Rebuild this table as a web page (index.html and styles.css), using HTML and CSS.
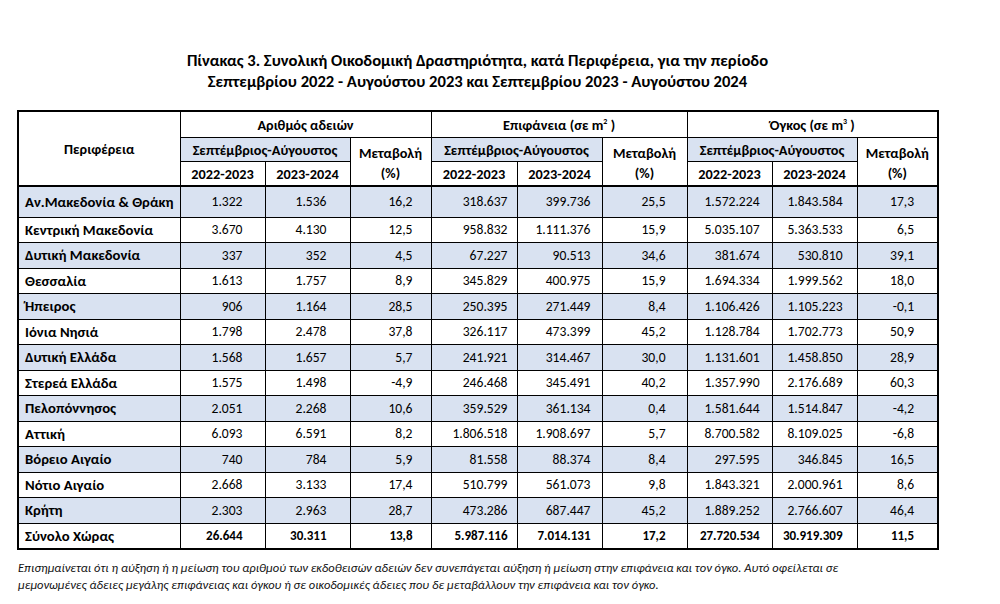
FILE: index.html
```html
<!DOCTYPE html>
<html lang="el">
<head>
<meta charset="utf-8">
<title>Πίνακας 3</title>
<link rel="stylesheet" href="styles.css">
</head>
<body>
<div class="page">
  <h1 class="title">Πίνακας 3. Συνολική Οικοδομική Δραστηριότητα, κατά Περιφέρεια, για την περίοδο<br>Σεπτεμβρίου 2022 - Αυγούστου 2023 και Σεπτεμβρίου 2023 - Αυγούστου 2024</h1>
  <table class="data">
    <colgroup>
      <col class="c-region"><col class="c-85"><col class="c-85"><col class="c-81"><col class="c-86"><col class="c-85"><col class="c-85"><col class="c-85"><col class="c-85"><col class="c-81">
    </colgroup>
    <thead>
      <tr class="h1">
        <th rowspan="3" class="region-h">Περιφέρεια</th>
        <th colspan="3">Αριθμός αδειών</th>
        <th colspan="3">Επιφάνεια (σε m<sup>2</sup> )</th>
        <th colspan="3">Όγκος (σε m<sup>3</sup> )</th>
      </tr>
      <tr class="h2">
        <th colspan="2" class="blue">Σεπτέμβριος-Αύγουστος</th>
        <th rowspan="2" class="chg">Μεταβολή<br>(%)</th>
        <th colspan="2" class="blue">Σεπτέμβριος-Αύγουστος</th>
        <th rowspan="2" class="chg">Μεταβολή<br>(%)</th>
        <th colspan="2" class="blue">Σεπτέμβριος-Αύγουστος</th>
        <th rowspan="2" class="chg">Μεταβολή<br>(%)</th>
      </tr>
      <tr class="h3">
        <th>2022-2023</th><th>2023-2024</th>
        <th>2022-2023</th><th>2023-2024</th>
        <th>2022-2023</th><th>2023-2024</th>
      </tr>
    </thead>
    <tbody>
      <tr class="blue first"><th>Αν.Μακεδονία &amp; Θράκη</th><td>1.322</td><td>1.536</td><td>16,2</td><td>318.637</td><td>399.736</td><td>25,5</td><td>1.572.224</td><td>1.843.584</td><td>17,3</td></tr>
      <tr><th>Κεντρική Μακεδονία</th><td>3.670</td><td>4.130</td><td>12,5</td><td>958.832</td><td>1.111.376</td><td>15,9</td><td>5.035.107</td><td>5.363.533</td><td>6,5</td></tr>
      <tr class="blue"><th>Δυτική Μακεδονία</th><td>337</td><td>352</td><td>4,5</td><td>67.227</td><td>90.513</td><td>34,6</td><td>381.674</td><td>530.810</td><td>39,1</td></tr>
      <tr><th>Θεσσαλία</th><td>1.613</td><td>1.757</td><td>8,9</td><td>345.829</td><td>400.975</td><td>15,9</td><td>1.694.334</td><td>1.999.562</td><td>18,0</td></tr>
      <tr class="blue"><th>Ήπειρος</th><td>906</td><td>1.164</td><td>28,5</td><td>250.395</td><td>271.449</td><td>8,4</td><td>1.106.426</td><td>1.105.223</td><td>-0,1</td></tr>
      <tr><th>Ιόνια Νησιά</th><td>1.798</td><td>2.478</td><td>37,8</td><td>326.117</td><td>473.399</td><td>45,2</td><td>1.128.784</td><td>1.702.773</td><td>50,9</td></tr>
      <tr class="blue"><th>Δυτική Ελλάδα</th><td>1.568</td><td>1.657</td><td>5,7</td><td>241.921</td><td>314.467</td><td>30,0</td><td>1.131.601</td><td>1.458.850</td><td>28,9</td></tr>
      <tr><th>Στερεά Ελλάδα</th><td>1.575</td><td>1.498</td><td>-4,9</td><td>246.468</td><td>345.491</td><td>40,2</td><td>1.357.990</td><td>2.176.689</td><td>60,3</td></tr>
      <tr class="blue"><th>Πελοπόννησος</th><td>2.051</td><td>2.268</td><td>10,6</td><td>359.529</td><td>361.134</td><td>0,4</td><td>1.581.644</td><td>1.514.847</td><td>-4,2</td></tr>
      <tr><th>Αττική</th><td>6.093</td><td>6.591</td><td>8,2</td><td>1.806.518</td><td>1.908.697</td><td>5,7</td><td>8.700.582</td><td>8.109.025</td><td>-6,8</td></tr>
      <tr class="blue"><th>Βόρειο Αιγαίο</th><td>740</td><td>784</td><td>5,9</td><td>81.558</td><td>88.374</td><td>8,4</td><td>297.595</td><td>346.845</td><td>16,5</td></tr>
      <tr><th>Νότιο Αιγαίο</th><td>2.668</td><td>3.133</td><td>17,4</td><td>510.799</td><td>561.073</td><td>9,8</td><td>1.843.321</td><td>2.000.961</td><td>8,6</td></tr>
      <tr class="blue"><th>Κρήτη</th><td>2.303</td><td>2.963</td><td>28,7</td><td>473.286</td><td>687.447</td><td>45,2</td><td>1.889.252</td><td>2.766.607</td><td>46,4</td></tr>
      <tr class="total"><th>Σύνολο Χώρας</th><td>26.644</td><td>30.311</td><td>13,8</td><td>5.987.116</td><td>7.014.131</td><td>17,2</td><td>27.720.534</td><td>30.919.309</td><td>11,5</td></tr>
    </tbody>
  </table>
  <p class="note">Επισημαίνεται ότι η αύξηση ή η μείωση του αριθμού των εκδοθεισών αδειών δεν συνεπάγεται αύξηση ή μείωση στην επιφάνεια και τον όγκο. Αυτό οφείλεται σε μεμονωμένες άδειες μεγάλης επιφάνειας και όγκου ή σε οικοδομικές άδειες που δε μεταβάλλουν την επιφάνεια και τον όγκο.</p>
</div>
</body>
</html>
```
FILE: styles.css
```css
html, body {
  margin: 0;
  padding: 0;
  background: #ffffff;
}
body {
  font-family: Carlito, Calibri, Lato, "Liberation Sans", sans-serif;
  color: #000;
}
.page {
  width: 921px;
  margin-left: 17px;
  padding-top: 50px;
}
.title {
  margin: 0 0 18px 0;
  font-size: 16.6px;
  line-height: 21px;
  font-weight: bold;
  text-align: center;
}
.data {
  border-collapse: collapse;
  width: 921px;
  table-layout: fixed;
  font-size: 14.7px;
  border: 2px solid #000;
}
.c-region { width: 162px; }
.c-85 { width: 85px; }
.c-81 { width: 81px; }
.c-86 { width: 86px; }
.data th, .data td {
  border: 1px solid #000;
  padding: 0;
  white-space: nowrap;
}
.data thead th {
  font-weight: bold;
  font-size: 14.3px;
  text-align: center;
  line-height: 16px;
}
.data thead .h1 th { height: 25px; }
.data thead .h2 th { height: 23px; }
.data thead .h3 th { height: 23px; }
.data thead .h3 th,
.data thead .chg,
.data thead .region-h { border-bottom: 2px solid #000; }
.data thead .chg { line-height: 20px; padding-top: 2px; }
.data sup { font-size: 8px; vertical-align: 6px; line-height: 0; }
.data thead th.blue { background: #d9e2f1; }
.data tbody tr.blue { background: #d9e2f1; }
.data tbody th {
  text-align: left;
  font-weight: bold;
  padding-left: 6px;
}
.data tbody td {
  text-align: right;
  font-size: 13.6px;
}
.data tbody tr { height: 25.5px; }
.data tbody tr.first { height: 31px; }
.data tbody td:nth-child(2) { padding-right: 22px; }
.data tbody td:nth-child(3) { padding-right: 23px; }
.data tbody td:nth-child(4) { padding-right: 18px; }
.data tbody td:nth-child(5) { padding-right: 9px; }
.data tbody td:nth-child(6) { padding-right: 11px; }
.data tbody td:nth-child(7) { padding-right: 21px; }
.data tbody td:nth-child(8) { padding-right: 12px; }
.data tbody td:nth-child(9) { padding-right: 14px; }
.data tbody td:nth-child(10) { padding-right: 23px; }
.data tbody tr.total td {
  font-weight: bold;
  font-size: 13px;
}
.note {
  margin: 9px 0 0 1px;
  width: 860px;
  font-style: italic;
  font-size: 12.5px;
  line-height: 17px;
  color: #111;
}
```
